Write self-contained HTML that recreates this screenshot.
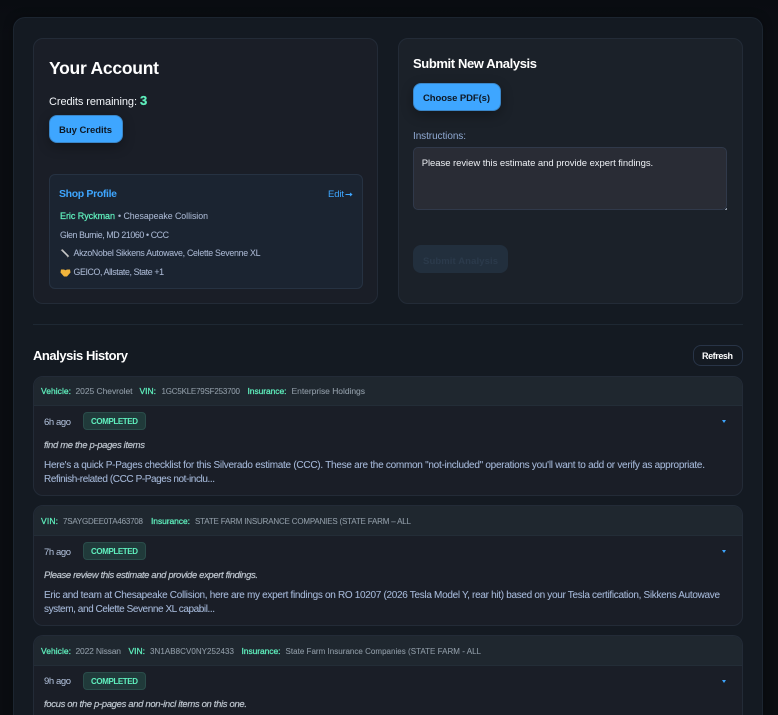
<!DOCTYPE html>
<html lang="en"><head><meta charset="utf-8"><title>Account</title>
<style>
html,body{margin:0;padding:0;width:778px;height:715px;overflow:hidden;background:#0a0d11;font-family:"Liberation Sans",sans-serif}
#page{position:relative;width:778px;height:715px;overflow:hidden;background:#0a0d11}
.b{position:absolute;box-sizing:border-box}
#top{left:0;top:0;width:778px;height:40px;background:linear-gradient(#090c11,#0b0e13)}
#panel{left:13px;top:17px;width:750px;height:698px;background:#141a22;border:1px solid #1c2530;border-bottom:0;border-radius:12px 12px 0 0;box-shadow:0 0 10px rgba(0,0,0,.3)}
.card{background:#1a1e27;border:1px solid #232b37;border-radius:10px}
.btn{background:#3ea6ff;border:1px solid #3a86c8;border-radius:8px;box-shadow:0 4px 12px rgba(0,0,0,.3)}
.hc{left:33px;width:710px;background:#1a1e27;border:1px solid #232b37;border-radius:10px;overflow:hidden}
.hh{position:absolute;left:0;top:0;right:0;height:28px;background:#1f272f;border-bottom:1px solid #232d37}
.badge{left:83px;width:63px;height:18px;background:#203a3a;border:1px solid #2a4c4a;border-radius:4px}
.caret{left:722px;width:0;height:0;border-left:2.5px solid transparent;border-right:2.5px solid transparent;border-top:3px solid #3ea6ff}
#tx{position:absolute;left:0;top:0}
text{font-family:"Liberation Sans",sans-serif;white-space:pre}
.g{fill:#5fefbd;stroke:#5fefbd;stroke-width:.25px}
.v{fill:#8f9ba6;stroke:#8f9ba6;stroke-width:.08px}
.h{font-size:8.500px}
.n{font-size:8px}
.l{font-size:9px}
.body{fill:#a3b6d6;stroke:#a3b6d6;stroke-width:.08px;font-size:10px}
.p{fill:#bcc4cd;stroke:#bcc4cd;stroke-width:.2px;font-size:9.500px;font-style:italic}
.age{fill:#b4c4df;font-size:9.500px}
.cm{fill:#5fefbd;font-size:8px;font-weight:700}
.s{fill:#a9b7d2;stroke:#a9b7d2;stroke-width:.06px;font-size:8.800px}
</style></head><body>
<div id="page">
<div class="b" id="top"></div>
<div class="b" id="panel"></div>

<div class="b card" style="left:33px;top:38px;width:345px;height:266px"></div>
<div class="b btn" style="left:49px;top:115px;width:74px;height:28px"></div>
<div class="b" style="left:49px;top:174px;width:314px;height:115px;background:#1b2431;border:1px solid #263242;border-radius:6px"></div>

<div class="b card" style="left:398px;top:38px;width:345px;height:266px;background:#1b2129"></div>
<div class="b btn" style="left:413px;top:83px;width:88px;height:28px"></div>
<div class="b" style="left:413px;top:147px;width:314px;height:63px;background:#292c35;border:1px solid #30394a;border-radius:5px"></div>
<div class="b" style="left:725px;top:208px;width:2px;height:2px;border-right:1px solid #8a93a0;border-bottom:1px solid #8a93a0"></div>
<div class="b" style="left:413px;top:245px;width:95px;height:28px;background:#222f3d;border-radius:8px"></div>

<div class="b" style="left:33px;top:324px;width:710px;height:1px;background:#1e2833"></div>
<div class="b" style="left:693px;top:345px;width:50px;height:21px;border:1px solid #283447;border-radius:8px;background:#141a22"></div>

<div class="b hc" style="top:376px;height:120px"><div class="hh"></div></div>
<div class="b hc" style="top:505px;height:121px"><div class="hh" style="height:29px"></div></div>
<div class="b hc" style="top:635px;height:80px;border-bottom:0;border-radius:10px 10px 0 0"><div class="hh" style="height:29px"></div></div>

<div class="b badge" style="top:412px"></div><div class="b caret" style="top:420px"></div>
<div class="b badge" style="top:542px"></div><div class="b caret" style="top:550px"></div>
<div class="b badge" style="top:672px"></div><div class="b caret" style="top:680px"></div>

<svg id="tx" width="778" height="715" viewBox="0 0 778 715" xmlns="http://www.w3.org/2000/svg">
<text x="49" y="74" font-size="17.500" font-weight="700" fill="#fff" textLength="110">Your Account</text>
<text x="49" y="105" font-size="11" fill="#f2f5f9" textLength="88">Credits remaining:</text>
<text x="140" y="105" font-size="13" font-weight="700" class="g" textLength="7">3</text>
<text x="59" y="133" font-size="9.500" font-weight="700" fill="#0d1824" textLength="53">Buy Credits</text>

<text x="59" y="197" font-size="10.500" font-weight="700" fill="#3ea6ff" textLength="58">Shop Profile</text>
<text x="328" y="197" font-size="9.500" fill="#3ea6ff" textLength="16">Edit</text>
<path d="M345.500 194.500h6M350 193l1.800 1.500-1.800 1.500" stroke="#3ea6ff" stroke-width="1" fill="none"/>
<text x="60" y="219" class="g l" textLength="55">Eric Ryckman</text>
<text x="118" y="219" class="s" textLength="90">• Chesapeake Collision</text>
<text x="60" y="238" class="s" textLength="109">Glen Burnie, MD 21060 • CCC</text>
<path d="M62.500 250.500L68 256" stroke="#c9c9c9" stroke-width="1.600" stroke-linecap="round"/>
<path d="M61 250.500l2-1M67 257l2-1" stroke="#9a9a9a" stroke-width="1"/>
<text x="73.500" y="256" class="s" textLength="187">AkzoNobel Sikkens Autowave, Celette Sevenne XL</text>
<path d="M61 269.500h3l1.500 .8 1.500-.8h3l.5 3-3.500 4h-3l-3.500-4z" fill="#f0b43c"/>
<text x="73.500" y="275" class="s" textLength="90.500">GEICO, Allstate, State +1</text>

<text x="413" y="68" font-size="13" font-weight="700" fill="#fff" textLength="124">Submit New Analysis</text>
<text x="423" y="101" font-size="9.500" font-weight="700" fill="#0d1824" textLength="67">Choose PDF(s)</text>
<text x="413" y="139" font-size="10" fill="#8fa9d2" textLength="53">Instructions:</text>
<text x="421.700" y="166" font-size="9.500" fill="#eef1f5" textLength="231.500">Please review this estimate and provide expert findings.</text>
<text x="423" y="264" font-size="9.500" font-weight="700" fill="#2b3a4b" textLength="75">Submit Analysis</text>

<text x="33" y="360" font-size="13" font-weight="700" fill="#fff" textLength="95">Analysis History</text>
<text x="702" y="359" font-size="9" font-weight="700" fill="#fff" textLength="31">Refresh</text>

<text x="41" y="394" class="g h" textLength="30">Vehicle:</text>
<text x="75.500" y="394" class="v h" textLength="57">2025 Chevrolet</text>
<text x="139.500" y="394" class="g h" textLength="16.500">VIN:</text>
<text x="161.500" y="394" class="v n" textLength="78.500">1GC5KLE79SF253700</text>
<text x="247.500" y="394" class="g h" textLength="39">Insurance:</text>
<text x="291.500" y="394" class="v h" textLength="73.500">Enterprise Holdings</text>
<text x="44" y="425" class="age" textLength="27">6h ago</text>
<text x="91" y="424" class="cm" textLength="47">COMPLETED</text>
<text x="44" y="448" class="p" textLength="101">find me the p-pages items</text>
<text x="44" y="468" class="body" textLength="661">Here's a quick P-Pages checklist for this Silverado estimate (CCC). These are the common "not-included" operations you'll want to add or verify as appropriate.</text>
<text x="44" y="482" class="body" textLength="171">Refinish-related (CCC P-Pages not-inclu...</text>

<text x="41" y="524" class="g h" textLength="17">VIN:</text>
<text x="63" y="524" class="v n" textLength="80">7SAYGDEE0TA463708</text>
<text x="151" y="524" class="g h" textLength="39">Insurance:</text>
<text x="195" y="524" class="v n" textLength="216">STATE FARM INSURANCE COMPANIES (STATE FARM – ALL</text>
<text x="44" y="555" class="age" textLength="27">7h ago</text>
<text x="91" y="554" class="cm" textLength="47">COMPLETED</text>
<text x="44" y="578" class="p" textLength="214">Please review this estimate and provide expert findings.</text>
<text x="44" y="598" class="body" textLength="676">Eric and team at Chesapeake Collision, here are my expert findings on RO 10207 (2026 Tesla Model Y, rear hit) based on your Tesla certification, Sikkens Autowave</text>
<text x="44" y="612" class="body" textLength="171">system, and Celette Sevenne XL capabil...</text>

<text x="41" y="654" class="g h" textLength="30">Vehicle:</text>
<text x="75.500" y="654" class="v h" textLength="45.500">2022 Nissan</text>
<text x="128.500" y="654" class="g h" textLength="16.500">VIN:</text>
<text x="150" y="654" class="v n" textLength="84">3N1AB8CV0NY252433</text>
<text x="241.500" y="654" class="g h" textLength="39">Insurance:</text>
<text x="285.500" y="654" class="v n" textLength="195.500">State Farm Insurance Companies (STATE FARM - ALL</text>
<text x="44" y="684" class="age" textLength="27">9h ago</text>
<text x="91" y="684" class="cm" textLength="47">COMPLETED</text>
<text x="44" y="707" class="p" textLength="203">focus on the p-pages and non-incl items on this one.</text>
</svg>
</div>
</body></html>
